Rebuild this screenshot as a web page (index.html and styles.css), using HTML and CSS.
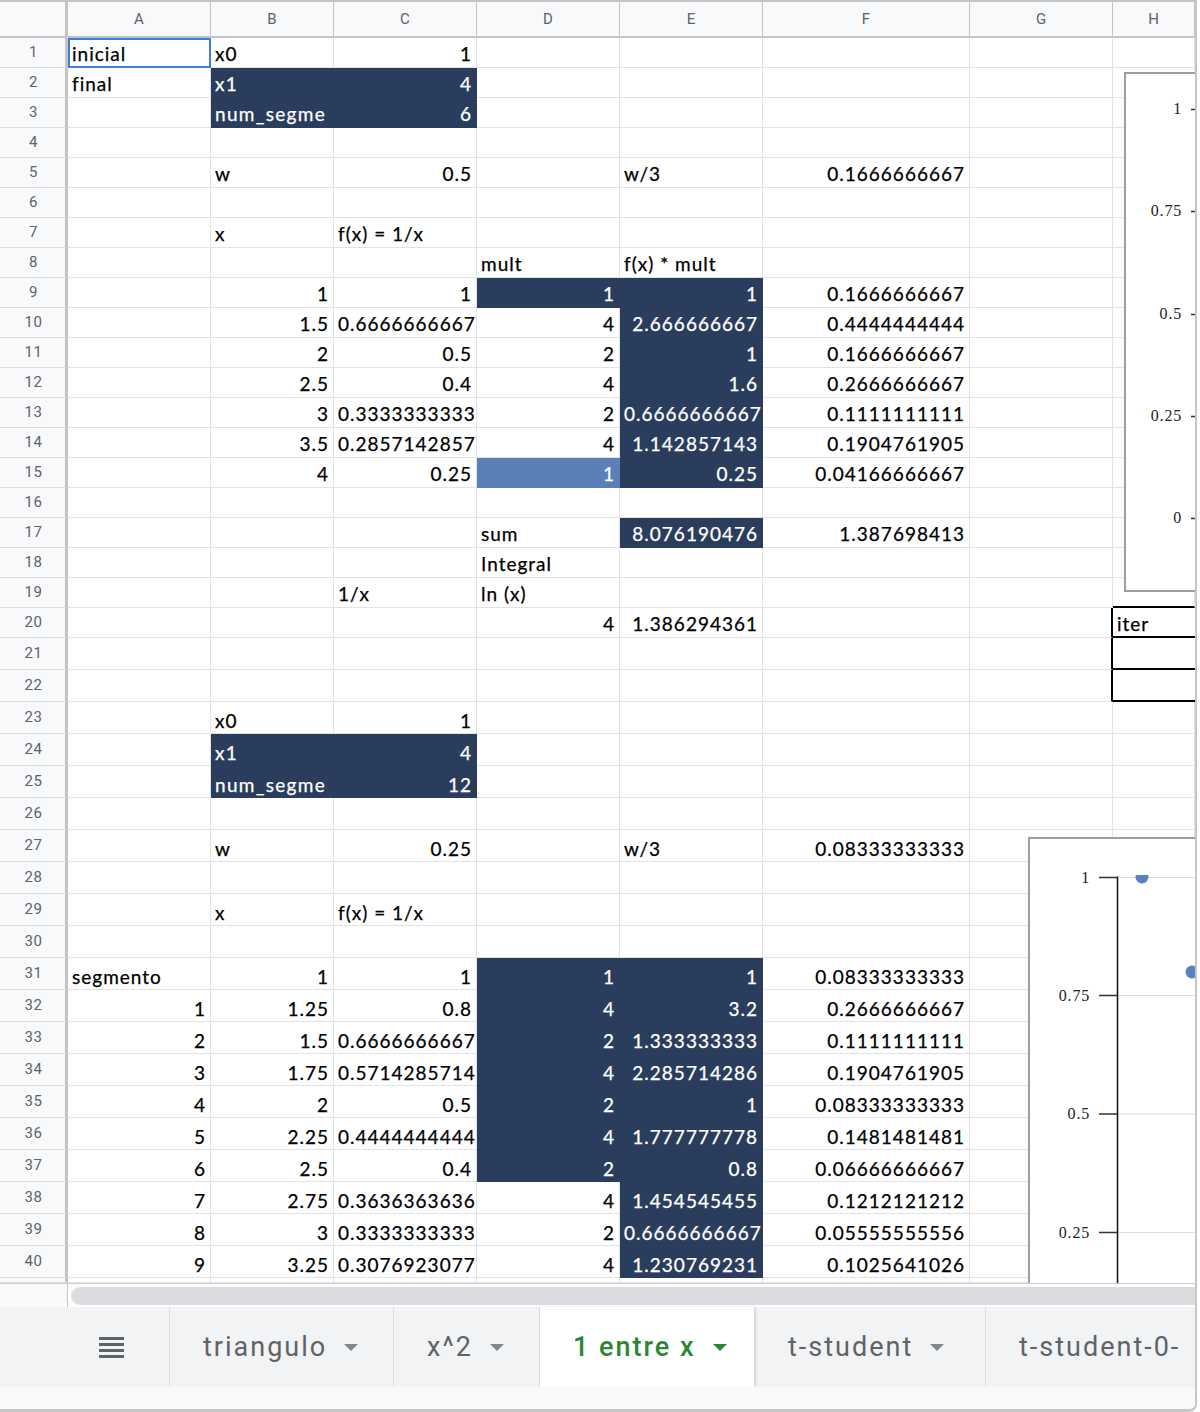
FILE: index.html
```html
<!DOCTYPE html>
<html lang="es">
<head>
<meta charset="utf-8">
<title>1 entre x</title>
<link rel="stylesheet" href="styles.css">
</head>
<body>
<div class="frame">
  <div class="sheet">
    <div class="row head"><div class="corner"></div><div class="ch">A</div><div class="ch">B</div><div class="ch">C</div><div class="ch">D</div><div class="ch">E</div><div class="ch">F</div><div class="ch">G</div><div class="ch">H</div></div>

    <div class="row"><div class="rh">1</div><div class="c t sel">inicial</div><div class="c t">x0</div><div class="c">1</div><div class="c"></div><div class="c"></div><div class="c"></div><div class="c"></div><div class="c"></div></div>
    <div class="row"><div class="rh">2</div><div class="c t">final</div><div class="c t n">x1</div><div class="c n">4</div><div class="c"></div><div class="c"></div><div class="c"></div><div class="c"></div><div class="c"></div></div>
    <div class="row"><div class="rh">3</div><div class="c"></div><div class="c t n">num_segme</div><div class="c n">6</div><div class="c"></div><div class="c"></div><div class="c"></div><div class="c"></div><div class="c"></div></div>
    <div class="row"><div class="rh">4</div><div class="c"></div><div class="c"></div><div class="c"></div><div class="c"></div><div class="c"></div><div class="c"></div><div class="c"></div><div class="c"></div></div>
    <div class="row"><div class="rh">5</div><div class="c"></div><div class="c t">w</div><div class="c">0.5</div><div class="c"></div><div class="c t">w/3</div><div class="c">0.1666666667</div><div class="c"></div><div class="c"></div></div>
    <div class="row"><div class="rh">6</div><div class="c"></div><div class="c"></div><div class="c"></div><div class="c"></div><div class="c"></div><div class="c"></div><div class="c"></div><div class="c"></div></div>
    <div class="row"><div class="rh">7</div><div class="c"></div><div class="c t">x</div><div class="c t">f(x) = 1/x</div><div class="c"></div><div class="c"></div><div class="c"></div><div class="c"></div><div class="c"></div></div>
    <div class="row"><div class="rh">8</div><div class="c"></div><div class="c"></div><div class="c"></div><div class="c t">mult</div><div class="c t">f(x) * mult</div><div class="c"></div><div class="c"></div><div class="c"></div></div>
    <div class="row"><div class="rh">9</div><div class="c"></div><div class="c">1</div><div class="c">1</div><div class="c n">1</div><div class="c n">1</div><div class="c">0.1666666667</div><div class="c"></div><div class="c"></div></div>
    <div class="row"><div class="rh">10</div><div class="c"></div><div class="c">1.5</div><div class="c">0.6666666667</div><div class="c">4</div><div class="c n">2.666666667</div><div class="c">0.4444444444</div><div class="c"></div><div class="c"></div></div>
    <div class="row"><div class="rh">11</div><div class="c"></div><div class="c">2</div><div class="c">0.5</div><div class="c">2</div><div class="c n">1</div><div class="c">0.1666666667</div><div class="c"></div><div class="c"></div></div>
    <div class="row"><div class="rh">12</div><div class="c"></div><div class="c">2.5</div><div class="c">0.4</div><div class="c">4</div><div class="c n">1.6</div><div class="c">0.2666666667</div><div class="c"></div><div class="c"></div></div>
    <div class="row"><div class="rh">13</div><div class="c"></div><div class="c">3</div><div class="c">0.3333333333</div><div class="c">2</div><div class="c n">0.6666666667</div><div class="c">0.1111111111</div><div class="c"></div><div class="c"></div></div>
    <div class="row"><div class="rh">14</div><div class="c"></div><div class="c">3.5</div><div class="c">0.2857142857</div><div class="c">4</div><div class="c n">1.142857143</div><div class="c">0.1904761905</div><div class="c"></div><div class="c"></div></div>
    <div class="row"><div class="rh">15</div><div class="c"></div><div class="c">4</div><div class="c">0.25</div><div class="c lb">1</div><div class="c n">0.25</div><div class="c">0.04166666667</div><div class="c"></div><div class="c"></div></div>
    <div class="row"><div class="rh">16</div><div class="c"></div><div class="c"></div><div class="c"></div><div class="c"></div><div class="c"></div><div class="c"></div><div class="c"></div><div class="c"></div></div>
    <div class="row"><div class="rh">17</div><div class="c"></div><div class="c"></div><div class="c"></div><div class="c t">sum</div><div class="c n">8.076190476</div><div class="c">1.387698413</div><div class="c"></div><div class="c"></div></div>
    <div class="row"><div class="rh">18</div><div class="c"></div><div class="c"></div><div class="c"></div><div class="c t">Integral</div><div class="c"></div><div class="c"></div><div class="c"></div><div class="c"></div></div>
    <div class="row"><div class="rh">19</div><div class="c"></div><div class="c"></div><div class="c t">1/x</div><div class="c t">ln (x)</div><div class="c"></div><div class="c"></div><div class="c"></div><div class="c bt"></div></div>
    <div class="row"><div class="rh">20</div><div class="c"></div><div class="c"></div><div class="c"></div><div class="c">4</div><div class="c">1.386294361</div><div class="c"></div><div class="c bxr"></div><div class="c t box">iter</div></div>

    <div class="row tall"><div class="rh">21</div><div class="c"></div><div class="c"></div><div class="c"></div><div class="c"></div><div class="c"></div><div class="c"></div><div class="c bxr"></div><div class="c box"></div></div>
    <div class="row tall"><div class="rh">22</div><div class="c"></div><div class="c"></div><div class="c"></div><div class="c"></div><div class="c"></div><div class="c"></div><div class="c bxr"></div><div class="c box"></div></div>
    <div class="row tall"><div class="rh">23</div><div class="c"></div><div class="c t">x0</div><div class="c">1</div><div class="c"></div><div class="c"></div><div class="c"></div><div class="c"></div><div class="c"></div></div>
    <div class="row tall"><div class="rh">24</div><div class="c"></div><div class="c t n">x1</div><div class="c n">4</div><div class="c"></div><div class="c"></div><div class="c"></div><div class="c"></div><div class="c"></div></div>
    <div class="row tall"><div class="rh">25</div><div class="c"></div><div class="c t n">num_segme</div><div class="c n">12</div><div class="c"></div><div class="c"></div><div class="c"></div><div class="c"></div><div class="c"></div></div>
    <div class="row tall"><div class="rh">26</div><div class="c"></div><div class="c"></div><div class="c"></div><div class="c"></div><div class="c"></div><div class="c"></div><div class="c"></div><div class="c"></div></div>
    <div class="row tall"><div class="rh">27</div><div class="c"></div><div class="c t">w</div><div class="c">0.25</div><div class="c"></div><div class="c t">w/3</div><div class="c">0.08333333333</div><div class="c"></div><div class="c"></div></div>
    <div class="row tall"><div class="rh">28</div><div class="c"></div><div class="c"></div><div class="c"></div><div class="c"></div><div class="c"></div><div class="c"></div><div class="c"></div><div class="c"></div></div>
    <div class="row tall"><div class="rh">29</div><div class="c"></div><div class="c t">x</div><div class="c t">f(x) = 1/x</div><div class="c"></div><div class="c"></div><div class="c"></div><div class="c"></div><div class="c"></div></div>
    <div class="row tall"><div class="rh">30</div><div class="c"></div><div class="c"></div><div class="c"></div><div class="c"></div><div class="c"></div><div class="c"></div><div class="c"></div><div class="c"></div></div>
    <div class="row tall"><div class="rh">31</div><div class="c t">segmento</div><div class="c">1</div><div class="c">1</div><div class="c n">1</div><div class="c n">1</div><div class="c">0.08333333333</div><div class="c"></div><div class="c"></div></div>
    <div class="row tall"><div class="rh">32</div><div class="c">1</div><div class="c">1.25</div><div class="c">0.8</div><div class="c n">4</div><div class="c n">3.2</div><div class="c">0.2666666667</div><div class="c"></div><div class="c"></div></div>
    <div class="row tall"><div class="rh">33</div><div class="c">2</div><div class="c">1.5</div><div class="c">0.6666666667</div><div class="c n">2</div><div class="c n">1.333333333</div><div class="c">0.1111111111</div><div class="c"></div><div class="c"></div></div>
    <div class="row tall"><div class="rh">34</div><div class="c">3</div><div class="c">1.75</div><div class="c">0.5714285714</div><div class="c n">4</div><div class="c n">2.285714286</div><div class="c">0.1904761905</div><div class="c"></div><div class="c"></div></div>
    <div class="row tall"><div class="rh">35</div><div class="c">4</div><div class="c">2</div><div class="c">0.5</div><div class="c n">2</div><div class="c n">1</div><div class="c">0.08333333333</div><div class="c"></div><div class="c"></div></div>
    <div class="row tall"><div class="rh">36</div><div class="c">5</div><div class="c">2.25</div><div class="c">0.4444444444</div><div class="c n">4</div><div class="c n">1.777777778</div><div class="c">0.1481481481</div><div class="c"></div><div class="c"></div></div>
    <div class="row tall"><div class="rh">37</div><div class="c">6</div><div class="c">2.5</div><div class="c">0.4</div><div class="c n">2</div><div class="c n">0.8</div><div class="c">0.06666666667</div><div class="c"></div><div class="c"></div></div>
    <div class="row tall"><div class="rh">38</div><div class="c">7</div><div class="c">2.75</div><div class="c">0.3636363636</div><div class="c">4</div><div class="c n">1.454545455</div><div class="c">0.1212121212</div><div class="c"></div><div class="c"></div></div>
    <div class="row tall"><div class="rh">39</div><div class="c">8</div><div class="c">3</div><div class="c">0.3333333333</div><div class="c">2</div><div class="c n">0.6666666667</div><div class="c">0.05555555556</div><div class="c"></div><div class="c"></div></div>
    <div class="row tall"><div class="rh">40</div><div class="c">9</div><div class="c">3.25</div><div class="c">0.3076923077</div><div class="c">4</div><div class="c n">1.230769231</div><div class="c">0.1025641026</div><div class="c"></div><div class="c"></div></div>
    <div class="row stub"><div class="rh"></div><div class="c"></div><div class="c"></div><div class="c"></div><div class="c"></div><div class="c"></div><div class="c"></div><div class="c"></div><div class="c"></div></div>

    <div class="chart chart1">
      <svg width="120" height="516" viewBox="0 0 120 516">
        <g class="lbl">
          <text x="56" y="40">1</text>
          <text x="56" y="142">0.75</text>
          <text x="56" y="245">0.5</text>
          <text x="56" y="347">0.25</text>
          <text x="56" y="449">0</text>
        </g>
        <path d="M65 35.5H72M65 137.5H72M65 240.5H72M65 342.5H72M65 444.5H72" stroke="#333" stroke-width="1.5" fill="none"/>
      </svg>
    </div>

    <div class="chart chart2">
      <svg width="300" height="500" viewBox="0 0 300 500">
        <defs><clipPath id="plot"><rect x="88" y="36" width="300" height="500"/></clipPath></defs>
        <path d="M88 38.5H300M88 156.5H300M88 275H300M88 393.5H300" stroke="#dedede" stroke-width="1" fill="none"/>
        <path d="M69 38.5H88M69 156.5H88M69 275H88M69 393.5H88" stroke="#333" stroke-width="1.5" fill="none"/>
        <path d="M87.5 37.5V500" stroke="#111" stroke-width="1.5" fill="none"/>
        <g clip-path="url(#plot)" fill="#5a82c4">
          <circle cx="112" cy="38" r="6.5"/>
          <circle cx="162" cy="133" r="6.5"/>
        </g>
        <g class="lbl">
          <text x="60" y="43.5">1</text>
          <text x="60" y="161.5">0.75</text>
          <text x="60" y="280">0.5</text>
          <text x="60" y="398.5">0.25</text>
        </g>
      </svg>
    </div>
  </div>

  <div class="hscroll"><div class="hs-corner"></div><div class="thumb"></div></div>

  <div class="tabs">
    <div class="menu">
      <svg width="25" height="21" viewBox="0 0 25 21"><g fill="#5f6368"><rect y="0" width="25" height="3"/><rect y="6" width="25" height="3"/><rect y="12" width="25" height="3"/><rect y="18" width="25" height="3"/></g></svg>
    </div>
    <div class="tab w1"><span>triangulo</span><span class="caret"></span></div>
    <div class="tab w2"><span>x^2</span><span class="caret"></span></div>
    <div class="tab w3 active"><span>1 entre x</span><span class="caret"></span></div>
    <div class="tab w4"><span>t-student</span><span class="caret"></span></div>
    <div class="tab w5"><span>t-student-0-</span></div>
  </div>
  <div class="foot"></div>
</div>
</body>
</html>
```

FILE: styles.css
```css
* { box-sizing: border-box; margin: 0; padding: 0; }

html, body {
  width: 1200px;
  height: 1412px;
  background: #ffffff;
  overflow: hidden;
}

.frame {
  width: 1197px;
  height: 1412px;
  border-right: 2px solid #c6c6c6;
  border-bottom: 3px solid #c6c6c6;
  border-bottom-right-radius: 8px;
  overflow: hidden;
  display: flex;
  flex-direction: column;
}

.sheet {
  position: relative;
  height: 1283px;
  flex: none;
  overflow: hidden;
}

.row {
  display: grid;
  grid-template-columns: 68px 143px 123px 143px 143px 143px 207px 143px 82px;
  height: 30px;
}
.row.tall { height: 32px; }
.row.head { height: 38px; }
.row.stub { height: 5px; }

.corner {
  background: #f8f9fa;
  border-top: 2px solid #c4c4c4;
  border-bottom: 2px solid #c4c4c4;
  border-right: 3px solid #c4c4c4;
}
.ch {
  background: #f8f9fa;
  border-top: 2px solid #c4c4c4;
  border-bottom: 2px solid #c4c4c4;
  border-right: 1px solid #c4c4c4;
  text-align: center;
  font: 15px/34px Roboto, "Liberation Sans", sans-serif;
  color: #5f6368;
}

.rh {
  background: #f8f9fa;
  border-right: 3px solid #c4c4c4;
  border-bottom: 1px solid #dcdcdc;
  text-align: center;
  padding-left: 2px;
  font: 15px Roboto, "Liberation Sans", sans-serif;
  letter-spacing: 0.5px;
  line-height: 29px;
  color: #5f6368;
}
.tall .rh { line-height: 31px; }
.stub .rh { line-height: 4px; }

.c {
  border-right: 1px solid #e2e2e2;
  border-bottom: 1px solid #e2e2e2;
  padding: 5px 4px 0 4px;
  font: 19px/1.2 Lato, "Noto Sans", sans-serif;
  letter-spacing: 1px;
  -webkit-text-stroke: 0.25px currentColor;
  color: #000000;
  text-align: right;
  white-space: nowrap;
  overflow: hidden;
}
.tall .c { padding-top: 8px; }
.stub .c { padding: 0; }

.c.t { text-align: left; }
.c.n.t { letter-spacing: 1.3px; }

.c.n {
  background: #2b3d5c;
  border-color: #2b3d5c;
  color: #ffffff;
}
.c.lb {
  background: #5b80b8;
  border-color: #5b80b8;
  color: #ffffff;
}
.c.sel {
  outline: 2px solid #3b7de0;
  outline-offset: -2px;
}

.c.bt { border-bottom: 2px solid #000000; }
.c.bxr { border-right: 2px solid #000000; }
.c.box { border-bottom: 2px solid #000000; border-right: none; }

/* floating charts */
.chart {
  position: absolute;
  background: #ffffff;
  border: 2px solid #9e9e9e;
}
.chart svg { display: block; }
.chart1 {
  left: 1124px;
  top: 72px;
  width: 140px;
  height: 520px;
}
.chart2 {
  left: 1028px;
  top: 837px;
  width: 320px;
  height: 520px;
}
.lbl text {
  font-family: "Liberation Serif", "DejaVu Serif", serif;
  font-size: 16px;
  letter-spacing: 0.8px;
  fill: #222222;
  text-anchor: end;
}

/* horizontal scrollbar */
.hscroll {
  height: 24px;
  flex: none;
  display: flex;
  border-top: 1px solid #d0d0d0;
  background: #ffffff;
}
.hs-corner {
  width: 68px;
  background: #f8f9fa;
  border-right: 1px solid #c4c4c4;
}
.thumb {
  flex: 1;
  margin: 3px 0 2px 3px;
  background: #dadce0;
  border-radius: 9px 0 0 9px;
}

/* sheet tabs */
.tabs {
  height: 80px;
  flex: none;
  display: flex;
  background: #f1f3f4;
}
.menu {
  width: 170px;
  flex: none;
  display: flex;
  align-items: center;
  padding-left: 99px;
  border-right: 1px solid #dadce0;
}
.tab {
  flex: none;
  display: flex;
  align-items: center;
  padding-left: 33px;
  border-right: 1px solid #dadce0;
  font: 27px Roboto, "Liberation Sans", sans-serif;
  letter-spacing: 2px;
  color: #5f6368;
  white-space: nowrap;
  overflow: hidden;
}
.w1 { width: 224px; }
.w2 { width: 146px; }
.w3 { width: 215px; }
.w4 { width: 231px; }
.w5 { flex: 1; border-right: none; }

.caret {
  width: 0;
  height: 0;
  margin-left: 17px;
  border-left: 7px solid transparent;
  border-right: 7px solid transparent;
  border-top: 7px solid #80868b;
}
.tab.active {
  background: #ffffff;
  color: #2e8536;
  font-weight: 500;
  box-shadow: 1px 0 3px rgba(0, 0, 0, 0.12);
}
.tab.active .caret { border-top-color: #2e8536; }

.foot {
  flex: 1;
  background: #f8f9fa;
}
```
